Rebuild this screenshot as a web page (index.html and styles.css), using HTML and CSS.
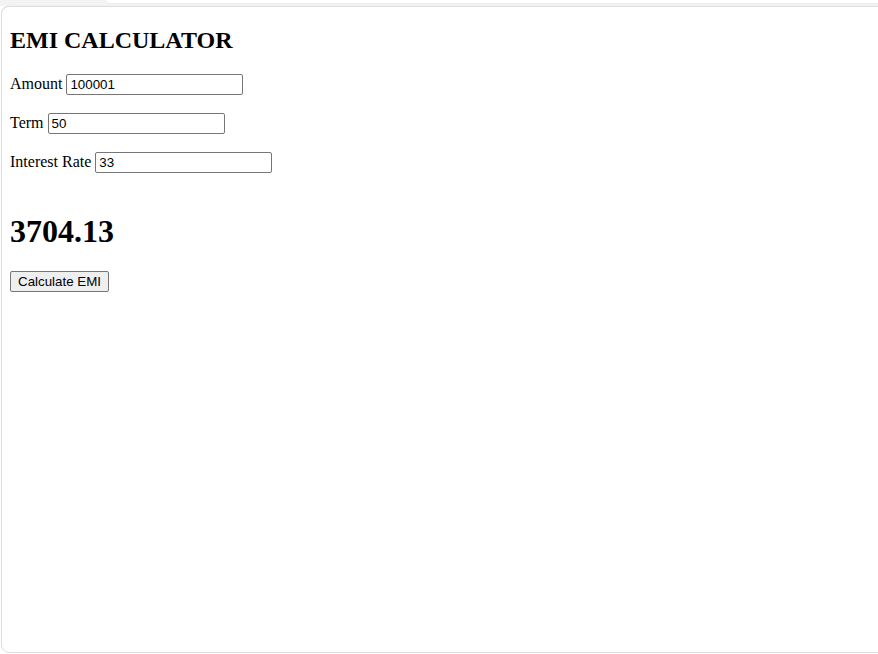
FILE: index.html
```html
<!DOCTYPE html>
<html>
<head>
<meta charset="utf-8">
<link rel="stylesheet" href="styles.css">
</head>
<body>
<div class="frame">
  <div class="topbar">
    <div class="topbar-gap"></div>
    <div class="topbar-tab"></div>
  </div>
  <div class="panel">
    <div class="content">
      <h2 class="title">EMI CALCULATOR</h2>
      <p class="row"><label>Amount</label> <input type="text" value="100001"></p>
      <p class="row"><label>Term</label> <input type="text" value="50"></p>
      <p class="row"><label>Interest Rate</label> <input type="text" value="33"></p>
      <h1 class="result">3704.13</h1>
      <button class="btn">Calculate EMI</button>
    </div>
  </div>
</div>
</body>
</html>
```

FILE: styles.css
```css
html, body {
  margin: 0;
  padding: 0;
  background: #ffffff;
}
body {
  font-family: "Liberation Serif", "Times New Roman", serif;
  font-size: 16px;
  color: #000;
}
.frame {
  width: 878px;
  height: 654px;
  display: flex;
  flex-direction: column;
  overflow: hidden;
}
.topbar {
  height: 6px;
  flex: none;
  display: flex;
  background: #f3f3f3;
}
.topbar-gap {
  width: 106px;
  flex: none;
}
.topbar-tab {
  flex: 1;
  height: 3px;
  background: #ffffff;
  border-bottom-left-radius: 8px;
  border-bottom: 1px solid #ececec;
}
.panel {
  height: 647px;
  box-sizing: border-box;
  margin-left: 1px;
  margin-right: -10px;
  border: 1px solid #dedede;
  border-radius: 8px;
  background: #fff;
  box-shadow: 0 -1px 0 #f0f0f0;
}
.content {
  padding: 0 8px;
  display: flow-root;
}
.title {
  font-size: 24px;
  font-weight: bold;
  margin: 19.92px 0 17.92px;
}
.row {
  margin: 16px 0;
  height: 23px;
  line-height: 23px;
}
input {
  font-family: "Liberation Sans", Arial, sans-serif;
  font-size: 13.333px;
  padding: 1px 3px;
  height: 21px;
  width: 177px;
  box-sizing: border-box;
  border: 1px solid #767676;
  border-radius: 2px;
  color: #000;
  vertical-align: baseline;
}
.result {
  font-size: 32px;
  font-weight: bold;
  margin: 40px 0 21.44px;
}
.btn {
  font-family: "Liberation Sans", Arial, sans-serif;
  font-size: 13.333px;
  padding: 1px 6px;
  height: 21px;
  width: 99px;
  box-sizing: border-box;
  border: 1px solid #767676;
  border-radius: 2px;
  background: #efefef;
  color: #000;
}
```
